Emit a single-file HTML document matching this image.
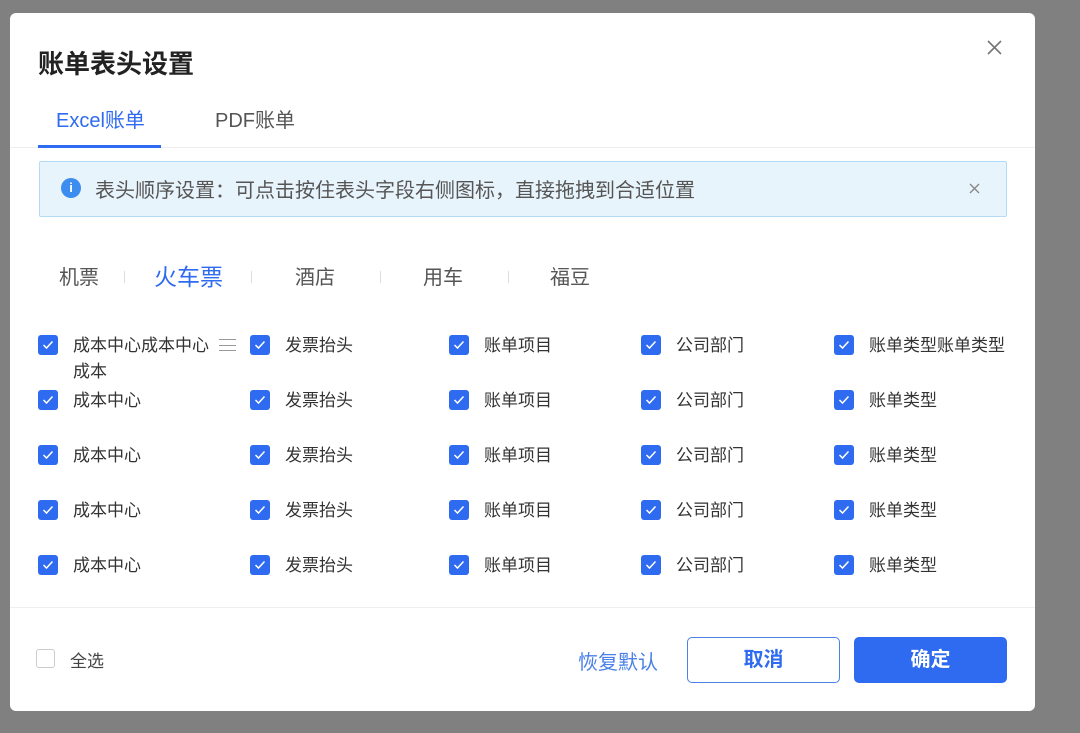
<!DOCTYPE html>
<html><head><meta charset="utf-8"><style>
*{margin:0;padding:0;box-sizing:border-box}
body{width:1080px;height:733px;background:#808080;position:relative;overflow:hidden;font-family:"Liberation Sans","Noto Sans CJK SC",sans-serif;color:#333}
.dlg{position:absolute;left:10px;top:13px;width:1025px;height:698px;background:#fff;border-radius:6px}
.a{position:absolute;white-space:nowrap}
.cb{position:absolute;width:20px;height:20px;background:#2f6bf0;border-radius:3px}
.cb svg{position:absolute;left:4px;top:5px}
.lbl{position:absolute;font-size:17px;color:#333;line-height:20px;white-space:nowrap}
.sep{position:absolute;width:1px;height:12px;background:#ddd;top:271px}
</style></head><body>
<div class="dlg"></div>
<div class="a" style="left:38px;top:44px;font-size:26px;font-weight:bold;color:#222">账单表头设置</div>
<svg class="a" style="left:987px;top:40px" width="15" height="15"><path d="M1 1L14 14M14 1L1 14" stroke="#777" stroke-width="1.6"/></svg>
<div class="a" style="left:56px;top:104px;font-size:20px;color:#2f6bf0">Excel账单</div>
<div class="a" style="left:215px;top:104px;font-size:20px;color:#555">PDF账单</div>
<div class="a" style="left:10px;top:147px;width:1025px;height:1px;background:#eee"></div>
<div class="a" style="left:38px;top:145px;width:123px;height:3px;background:#2f6bf0"></div>
<div class="a" style="left:39px;top:161px;width:968px;height:56px;background:#e8f4fc;border:1px solid #b5daf5;border-radius:2px"></div>
<div class="a" style="left:61px;top:178px;width:20px;height:20px;border-radius:50%;background:#3d8df0;color:#fff;font-size:13px;font-weight:bold;text-align:center;line-height:20px">i</div>
<div class="a" style="left:95px;top:174px;font-size:20px;color:#555">表头顺序设置：可点击按住表头字段右侧图标，直接拖拽到合适位置</div>
<svg class="a" style="left:969px;top:183px" width="11" height="11"><path d="M1 1L10 10M10 1L1 10" stroke="#888" stroke-width="1.4"/></svg>
<div class="a" style="left:59px;top:261px;font-size:20px;color:#555">机票</div>
<div class="sep" style="left:124px"></div>
<div class="a" style="left:154px;top:258px;font-size:23px;color:#2f6bf0">火车票</div>
<div class="sep" style="left:251px"></div>
<div class="a" style="left:295px;top:261px;font-size:20px;color:#555">酒店</div>
<div class="sep" style="left:380px"></div>
<div class="a" style="left:423px;top:261px;font-size:20px;color:#555">用车</div>
<div class="sep" style="left:508px"></div>
<div class="a" style="left:550px;top:261px;font-size:20px;color:#555">福豆</div>
<div id="g"></div>
<div class="a" style="left:10px;top:607px;width:1025px;height:1px;background:#eee"></div>
<div class="a" style="left:36px;top:649px;width:19px;height:19px;border:1px solid #ccc;border-radius:3px"></div>
<div class="a" style="left:70px;top:647px;font-size:17px;color:#444">全选</div>
<div class="a" style="left:578px;top:646px;font-size:20px;color:#4a80e8">恢复默认</div>
<div class="a" style="left:687px;top:637px;width:153px;height:46px;border:1px solid #4a80e8;border-radius:5px;text-align:center;line-height:44px;font-size:20px;color:#2f6bf0;font-weight:bold">取消</div>
<div class="a" style="left:854px;top:637px;width:153px;height:46px;background:#2f6bf0;border-radius:5px;text-align:center;line-height:46px;font-size:20px;color:#fff;font-weight:bold">确定</div>
<script>
var xs=[38,250,449,641,834],ys=[345,400,455,510,565],t=["成本中心","发票抬头","账单项目","公司部门","账单类型"],h="";
var ck='<svg width="12" height="10"><path d="M1.5 5L4.5 8L10.5 1.5" fill="none" stroke="#fff" stroke-width="1.5"/></svg>';
for(var r=0;r<5;r++)for(var c=0;c<5;c++){var x=xs[c],y=ys[r];h+='<div class="cb" style="left:'+x+'px;top:'+(y-10)+'px">'+ck+'</div>';
var s=t[c];if(r==0&&c==0)s="成本中心成本中心<br>成本";if(r==0&&c==4)s="账单类型账单类型";
h+='<div class="lbl" style="left:'+(x+35)+'px;top:'+(y-9)+'px;line-height:'+(r==0&&c==0?'26px':'20px')+';'+(r==0&&c==0?'top:'+(y-12)+'px':'')+'">'+s+'</div>';}
h+='<div class="a" style="left:219px;top:339px;width:17px;height:12px;border-top:1.5px solid #999;border-bottom:1.5px solid #999"></div><div class="a" style="left:219px;top:344.5px;width:17px;height:1.5px;background:#999"></div>';
document.getElementById("g").innerHTML=h;
</script>
</body></html>
